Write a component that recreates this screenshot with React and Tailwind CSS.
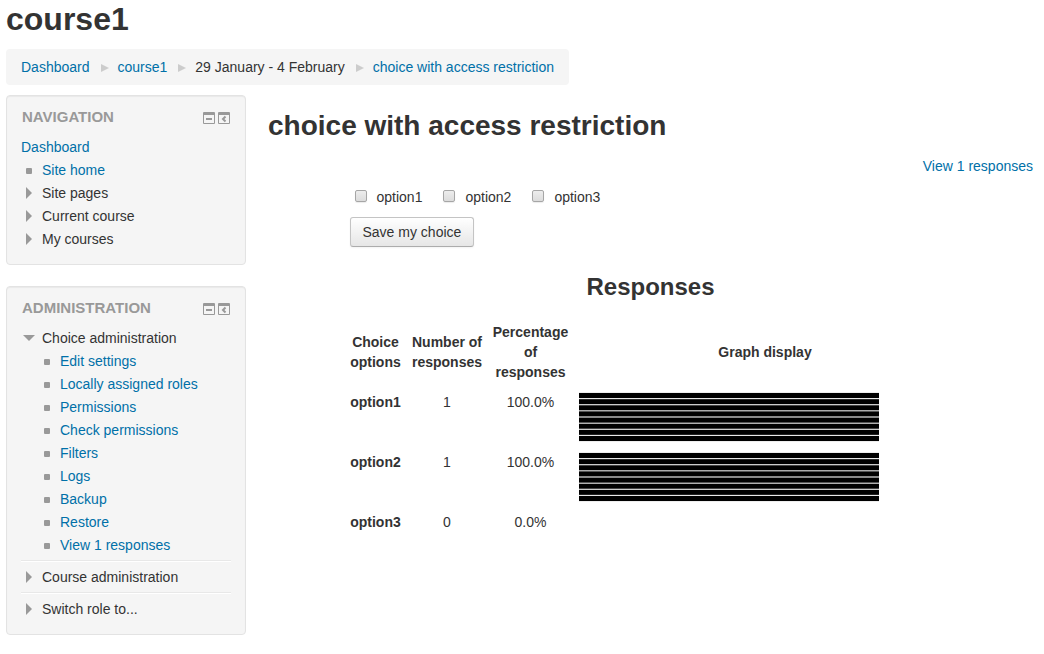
import React from "react";

const LINK = "text-[#0070a8] hover:underline";

const Separator = () => (
  <svg className="ml-[11px] mr-[9px] mt-px h-2 w-2" viewBox="0 0 8 8" aria-hidden="true">
    <path d="M0 0L8 4L0 8Z" fill="#ccc" />
  </svg>
);

function Marker({ kind }) {
  return (
    <span className="flex w-[21px] shrink-0 pl-[5px]" aria-hidden="true">
      {kind === "leaf" && <span className="mt-0.5 h-1.5 w-1.5 rounded-[1px] bg-[#999]" />}
      {kind === "closed" && (
        <svg className="h-3 w-1.5" viewBox="0 0 6 12">
          <path d="M0 0L6 6L0 12Z" fill="#999" />
        </svg>
      )}
      {kind === "open" && (
        <svg className="-ml-[3px] h-1.5 w-3" viewBox="0 0 12 6">
          <path d="M0 0H12L6 6Z" fill="#999" />
        </svg>
      )}
    </span>
  );
}

function TreeRow({ kind, children }) {
  return (
    <div className="mb-[3px] flex h-5 items-center">
      <Marker kind={kind} />
      {kind === "leaf" ? (
        <a href="#" className={LINK}>{children}</a>
      ) : (
        <span>{children}</span>
      )}
    </div>
  );
}

function Block({ title, children }) {
  return (
    <section className="rounded border border-[#e3e3e3] bg-[#f5f5f5] px-3.5 pb-3 pt-[11px] shadow-[inset_0_1px_1px_rgba(0,0,0,0.05)]">
      <header className="mb-2.5 flex h-5 items-center justify-between px-px">
        <h2 className="text-[15px] font-bold uppercase leading-5 text-[#999]">{title}</h2>
        <div className="flex gap-[3px] pt-0.5">
          <button type="button" aria-label={`Hide ${title} block`}>
            <svg className="h-3 w-3" viewBox="0 0 12 12">
              <rect width="12" height="12" rx="1" fill="#999" />
              <rect x="1" y="3" width="10" height="8" fill="#f5f5f5" />
              <rect x="3" y="6" width="6" height="2" fill="#999" />
            </svg>
          </button>
          <button type="button" aria-label={`Dock ${title} block`}>
            <svg className="h-3 w-3" viewBox="0 0 12 12">
              <rect width="12" height="12" rx="1" fill="#999" />
              <rect x="1" y="3" width="10" height="8" fill="#f5f5f5" />
              <path d="M7.5 4.5L5 7L7.5 9.5" fill="none" stroke="#999" strokeWidth="2" />
            </svg>
          </button>
        </div>
      </header>
      {children}
    </section>
  );
}

const Divided = ({ children }) => (
  <li className="pt-0.5">
    <div className="h-px bg-[#e8e8e8]" />
    <div className="mb-[5px] h-px bg-white" />
    {children}
  </li>
);

const STRIPES = [
  [0, "#eeeeee"], [6, "#e8e8e8"], [7, "#2a2a2a"], [12, "#cccccc"], [13, "#444444"],
  [18, "#aaaaaa"], [19, "#555555"], [24, "#888888"], [25, "#888888"], [30, "#555555"],
  [31, "#b0b0b0"], [36, "#444444"], [37, "#cccccc"], [42, "#222222"], [43, "#e8e8e8"],
  [49, "#eeeeee"],
];

const Bar = () => (
  <svg className="block h-[50px] w-[300px]" viewBox="0 0 300 50" shapeRendering="crispEdges" aria-hidden="true">
    <rect width="300" height="50" fill="#000" />
    {STRIPES.map(([y, fill]) => (
      <rect key={y} y={y} width="300" height="1" fill={fill} />
    ))}
  </svg>
);

const ADMIN_LINKS = [
  "Edit settings", "Locally assigned roles", "Permissions", "Check permissions",
  "Filters", "Logs", "Backup", "Restore", "View 1 responses",
];

const RESULTS = [
  { name: "option1", count: 1, percent: "100.0%", bar: true },
  { name: "option2", count: 1, percent: "100.0%", bar: true },
  { name: "option3", count: 0, percent: "0.0%", bar: false },
];

export default function App() {
  return (
    <div className="bg-white px-1.5 font-['Liberation_Sans',Arial,sans-serif] text-sm leading-5 text-[#333]">
      <h1 className="mb-[11px] text-[32px] font-bold leading-[38px]">course1</h1>
      <nav aria-label="Breadcrumb" className="mb-2.5 flex">
        <ol className="flex h-9 items-center rounded bg-[#f5f5f5] px-[15px]">
          <li><a href="#" className={LINK}>Dashboard</a></li>
          <li className="flex items-center"><Separator /><a href="#" className={LINK}>course1</a></li>
          <li className="flex items-center"><Separator />29 January - 4 February</li>
          <li className="flex items-center"><Separator /><a href="#" className={LINK}>choice with access restriction</a></li>
        </ol>
      </nav>

      <div className="flex gap-[22px]">
        <aside className="flex w-60 shrink-0 flex-col gap-[21px]">
          <Block title="Navigation">
            <div className="mb-[3px] h-5"><a href="#" className={LINK}>Dashboard</a></div>
            <ul>
              <li><TreeRow kind="leaf">Site home</TreeRow></li>
              <li><TreeRow kind="closed">Site pages</TreeRow></li>
              <li><TreeRow kind="closed">Current course</TreeRow></li>
              <li><TreeRow kind="closed">My courses</TreeRow></li>
            </ul>
          </Block>
          <Block title="Administration">
            <ul>
              <li>
                <TreeRow kind="open">Choice administration</TreeRow>
                <ul className="pl-[18px]">
                  {ADMIN_LINKS.map((text) => (
                    <li key={text}><TreeRow kind="leaf">{text}</TreeRow></li>
                  ))}
                </ul>
              </li>
              <Divided><TreeRow kind="closed">Course administration</TreeRow></Divided>
              <Divided><TreeRow kind="closed">Switch role to...</TreeRow></Divided>
            </ul>
          </Block>
        </aside>

        <main className="min-w-0 flex-1 pr-[5px] pt-[11px]">
          <h2 className="mb-2.5 text-[28px] font-bold leading-10">choice with access restriction</h2>
          <div className="mb-[11px] text-right"><a href="#" className={LINK}>View 1 responses</a></div>

          <form className="mx-auto w-4/5 px-[5px]" onSubmit={(e) => e.preventDefault()}>
            <div className="mb-2.5 flex gap-[21px] pl-[5px]">
              {RESULTS.map(({ name }) => (
                <label key={name} className="flex items-center gap-2.5">
                  <input
                    type="checkbox"
                    name={name}
                    className="-mt-0.5 h-3 w-3 appearance-none rounded-[2px] border border-[#a6a6a6] bg-linear-to-b from-[#ededed] to-[#dcdcdc] shadow-[0_1px_1px_rgba(0,0,0,0.08)] checked:bg-[#0070a8]"
                  />
                  {name}
                </label>
              ))}
            </div>
            <button
              type="submit"
              className="block h-[30px] rounded-[3px] border border-[#c4c4c4] border-b-[#acacac] bg-linear-to-b from-white to-[#e6e6e6] px-3 shadow-[inset_0_1px_0_rgba(255,255,255,0.2),0_1px_2px_rgba(0,0,0,0.05)]"
            >
              Save my choice
            </button>
          </form>

          <h3 className="mb-2.5 mt-5 text-center text-2xl font-bold leading-10">Responses</h3>
          <table className="mx-auto w-4/5 table-fixed border-collapse text-center">
            <colgroup>
              <col className="w-[62px]" />
              <col className="w-[81px]" />
              <col className="w-[86px]" />
              <col />
            </colgroup>
            <thead>
              <tr>
                <th scope="col" className="p-[5px]">Choice options</th>
                <th scope="col" className="p-[5px]">Number of responses</th>
                <th scope="col" className="p-[5px]">Percentage of responses</th>
                <th scope="col" className="p-[5px]">Graph display</th>
              </tr>
            </thead>
            <tbody>
              {RESULTS.map(({ name, count, percent, bar }) => (
                <tr key={name} className="align-top">
                  <th scope="row" className="p-[5px]">{name}</th>
                  <td className="p-[5px]">{count}</td>
                  <td className="p-[5px]">{percent}</td>
                  <td className="p-[5px]">{bar && <Bar />}</td>
                </tr>
              ))}
            </tbody>
          </table>
        </main>
      </div>
    </div>
  );
}
